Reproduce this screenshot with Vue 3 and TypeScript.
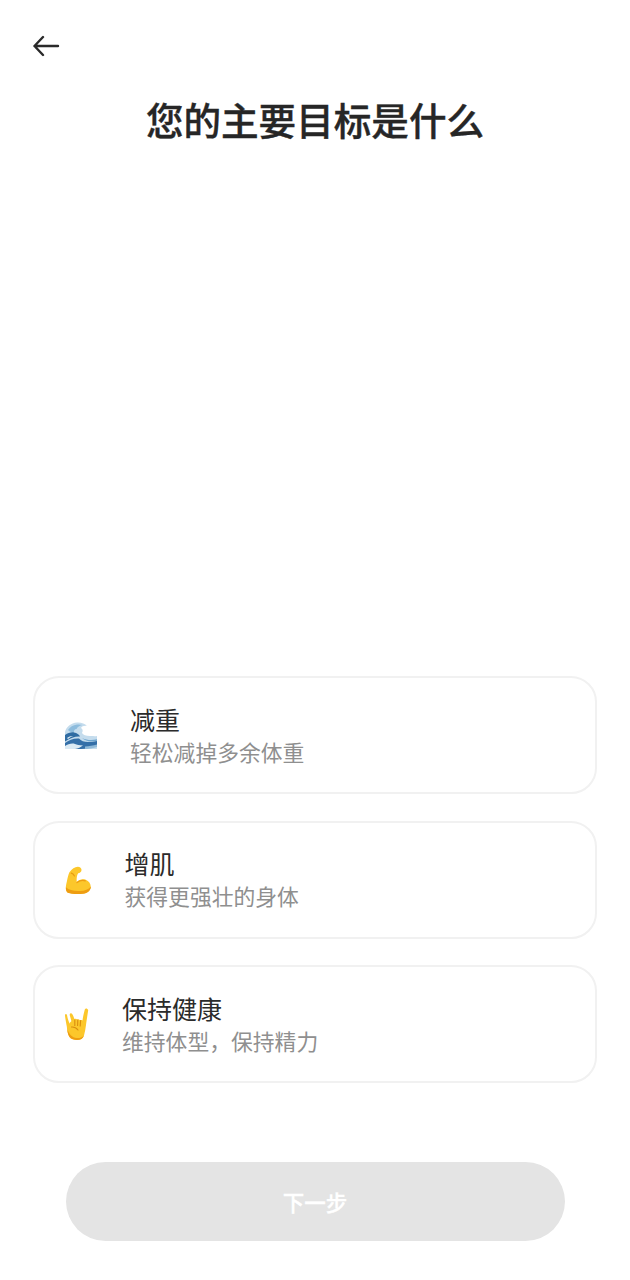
<script setup lang="ts">
const goals = [
  { key: "wave", title: "减重", desc: "轻松减掉多余体重" },
  { key: "muscle", title: "增肌", desc: "获得更强壮的身体" },
  { key: "horns", title: "保持健康", desc: "维持体型\uFF0C保持精力" },
];
</script>

<template>
  <div class="page">
    <button class="back" type="button" aria-label="返回">
      <svg width="28" height="22" viewBox="0 0 28 22" fill="none">
        <path d="M25 11H1.500M10 2L1.500 11L10 20" stroke="#2a2a2a" stroke-width="2.400" stroke-linecap="round" stroke-linejoin="round" />
      </svg>
    </button>
    <h1 class="title">您的主要目标是什么</h1>

    <div class="goals">
      <div v-for="goal in goals" :key="goal.key" class="goal">
        <svg v-if="goal.key === 'wave'" class="emoji" width="32" height="27" viewBox="0 0 32 27">
          <path d="M0 27V10C1 5 6 1 12 .5c4-.3 8 1 10 3.500-3-.5-5 .5-6 2 2 1 2 3 1 5 1 2 4 3 8 3 3 0 5 .5 7 0V27z" fill="#c4dced" />
          <path d="M3 8c2-3 5-5 9-5.500 2-.2 4 0 5.500.5-3 .5-5 2-6 4-2 0-3 2-2.500 4-2-.5-4-1-6-3z" fill="#8dbcdd" />
          <path d="M0 13c3-2 6-3 9-2.500 3 .5 5 2 6 4-4-.5-9 1-15 5z" fill="#2f6ca3" />
          <path d="M0 21c4-3 9-5 14-4.500 2 2.500 5 3.500 9 3.500 3 0 6-.5 9-1v5c-5 1.500-11 3-16 3H0z" fill="#346fa8" />
          <path d="M0 24c3-2 7-3 10-2 2 .7 4 1.500 8 1.500-2 1.500-5 3-8 3.500H0z" fill="#dbeaf4" />
          <path d="M17 16c3 1.500 6 2 9 2 2 0 4-.3 6-.8v1.500c-5 1-11 1.300-15-2.700z" fill="#6fa6d0" />
          <path d="M20 24.500c4-.2 8-.8 12-2v2.500c-4 1-8 2-12 2z" fill="#8fb9d8" />
          <path d="M2 16c2-1.500 4-2.200 6-2-2 .8-3.500 1.800-5 3z" fill="#e3eff6" />
        </svg>
        <svg v-else-if="goal.key === 'muscle'" class="emoji" width="26.500" height="28" viewBox="0 0 27 28">
          <path d="M4.500 6C7 2.800 10 .5 13 .5c2.600 0 4 1.600 3.800 3.500-.2 1.700-1.700 2.800-3.400 3.100-1.300 2-1.800 5.500-1.400 9 2.300-2.500 5.900-3.500 9.100-2.300 3.400 1.300 5.300 4.400 5.100 7.500-.3 3.300-3.300 6-7.500 6.400-6 .5-12.500.3-16-1C-.2 24.800.8 20 2 15c.6-3 1.300-6.500 2.500-9z" fill="#fcc72b" />
          <path d="M1 21.500c3 3 9 4.200 14.500 3.700 4.500-.4 8.500-1.700 11-4.700-.4 4-3.500 7-7.800 7.400-6 .5-12.500.3-16-1C1 25.800.8 23.500 1 21.500z" fill="#ee9d12" />
          <path d="M6.500 7c1.300.4 2.500 1.500 3 2.800" fill="none" stroke="#e89b10" stroke-width="1.400" stroke-linecap="round" />
          <path d="M12.200 16.600c2.700-2 5.800-2.700 8.500-1.700" fill="none" stroke="#ee9d12" stroke-width="1.200" stroke-linecap="round" />
        </svg>
        <svg v-else class="emoji" width="24" height="32" viewBox="0 0 24 32">
          <path d="M2 7c-.5-1.700-2.200-1.300-2 .5.300 3.500 1.200 7.500 1.800 11 .5 3.500.7 7.500 2.700 10.500 1.800 2.300 4.500 3 7.500 3 3.500 0 6-1.500 7-4.500 1-3.500 1.500-7 2-10.500.5-4 1.500-10 2.200-15C22.500.4 20.500-.4 19.800 1.500c-.8 3-1.800 7-2.300 11-.8-.5-1.800-.5-2.600-.2-.5-.8-1.600-1.200-2.700-.8-.6-.8-1.800-1-2.800-.4-.6-2-1.300-3.500-2.200-5-1-1.500-2.900-.5-2.400 1.300.6 2 1.200 4 1.600 5.800-1 .5-1.500 1.500-1.600 2.500C3.200 12.800 2.600 10 2 7z" fill="#fcc72b" />
          <path d="M2 20c.5 3.300.7 6.500 2.500 9 1.800 2.300 4.500 3 7.500 3 3.500 0 6-1.500 7-4.500-2 2-4.500 2.800-7.500 2.500C7.500 29.700 3.500 26 2 20z" fill="#ee9d12" />
          <path d="M9.800 12v5.500M12.800 12l-.2 5.500M15.600 12.500l-.4 5.500M6.500 19c2.300-.2 5 1 6.500 3" fill="none" stroke="#d98e10" stroke-width="1.100" stroke-linecap="round" />
        </svg>
        <div class="goal-text">
          <div class="goal-title">{{ goal.title }}</div>
          <div class="goal-desc">{{ goal.desc }}</div>
        </div>
      </div>
    </div>

    <button class="next" type="button">下一步</button>
  </div>
</template>

<style scoped>
.page {
  box-sizing: border-box;
  width: 630px;
  height: 1280px;
  display: flex;
  flex-direction: column;
  padding: 35px 33px 39px;
  background: #fff;
  font-family: "Noto Sans CJK SC", "Liberation Sans", sans-serif;
}

.back {
  align-self: flex-start;
  display: flex;
  padding: 0;
  border: none;
  background: none;
}

.title {
  margin: 35px 0 0;
  text-align: center;
  font-size: 37.600px;
  line-height: 54px;
  font-weight: 500;
  -webkit-text-stroke: 0.4px #262626;
  color: #262626;
}

.goals {
  margin-top: auto;
  display: flex;
  flex-direction: column;
  gap: 26.500px;
}

.goal {
  box-sizing: border-box;
  height: 118px;
  display: flex;
  align-items: center;
  gap: 33px;
  padding-left: 30px;
  border: 2px solid #f1f1f1;
  border-radius: 26px;
}

.emoji {
  flex: none;
}

.goal-title {
  font-size: 25px;
  line-height: 33px;
  color: #2b2b2b;
}

.goal-desc {
  margin-top: -1px;
  font-size: 21.800px;
  line-height: 33px;
  color: #8f8f8f;
}

.next {
  align-self: center;
  width: 499px;
  height: 79px;
  margin-top: 79px;
  border: none;
  border-radius: 40px;
  background: #e4e4e4;
  color: #fff;
  font-family: inherit;
  font-size: 21.500px;
  font-weight: 500;
  -webkit-text-stroke: 0.3px #fff;
}
</style>
